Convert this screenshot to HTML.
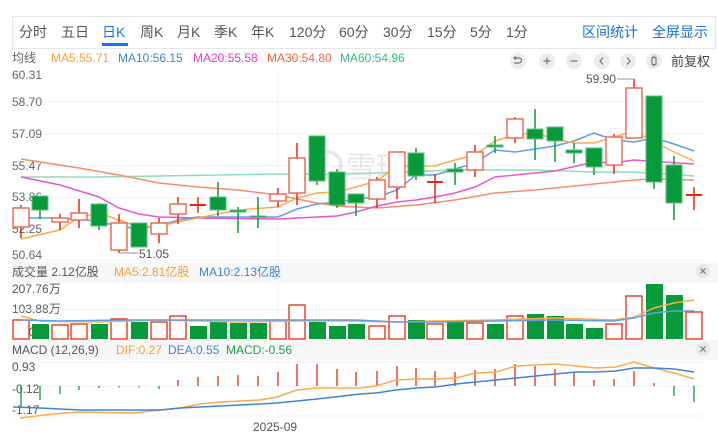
<!DOCTYPE html>
<html><head><meta charset="utf-8"><style>
html,body{margin:0;padding:0;background:#fff;width:718px;height:437px;overflow:hidden}
body{font-family:"Liberation Sans","Noto Sans CJK SC",sans-serif}
svg text{font-family:"Liberation Sans","Noto Sans CJK SC",sans-serif}
</style></head><body>
<svg width="718" height="437" viewBox="0 0 718 437" xmlns="http://www.w3.org/2000/svg">
<!-- tab bar -->
<rect x="12.5" y="16.5" width="703" height="32" fill="#fff" stroke="#e4e6ec"/>
<g font-size="14" fill="#555">
<text x="19" y="37">分时</text><text x="61" y="37">五日</text>
<text x="102" y="37" fill="#1a73e8">日K</text>
<text x="140" y="37">周K</text><text x="177" y="37">月K</text><text x="214" y="37">季K</text><text x="251" y="37">年K</text>
<text x="289" y="37">120分</text><text x="339" y="37">60分</text><text x="383" y="37">30分</text><text x="427" y="37">15分</text><text x="470" y="37">5分</text><text x="506" y="37">1分</text>
<text x="582" y="37" fill="#1a6fd8">区间统计</text><text x="652" y="37" fill="#1a6fd8">全屏显示</text>
</g>
<rect x="102" y="43" width="26" height="3" fill="#1a73e8"/>
<!-- MA legend -->
<g font-size="12">
<text x="12" y="62" fill="#666">均线</text>
<text x="51" y="62" fill="#f7a133">MA5:55.71</text>
<text x="118" y="62" fill="#3b86d8">MA10:56.15</text>
<text x="193" y="62" fill="#e33bc4">MA20:55.58</text>
<text x="267" y="62" fill="#f5643c">MA30:54.80</text>
<text x="340" y="62" fill="#2cc27a">MA60:54.96</text>
</g>
<g fill="#ececec"><circle cx="518" cy="61" r="8"/><circle cx="547" cy="61" r="8"/><circle cx="574" cy="61" r="8"/><circle cx="602" cy="61" r="8"/><circle cx="628" cy="61" r="8"/><circle cx="654" cy="61" r="8"/></g>
<g stroke="#777" stroke-width="1.2" fill="none">
<path d="M515 58h4a2.5 2.5 0 0 1 0 5h-5M516 56.5l-2 1.5 2 1.5"/>
<path d="M543.5 61h7M547 57.5v7"/><path d="M570.5 61h7"/>
<path d="M603 57.5l-3 3.5 3 3.5"/><path d="M627 57.5l3 3.5-3 3.5"/>
<rect x="652" y="57.5" width="4" height="7"/><path d="M654 55.5v2M654 64.5v2"/>
</g>
<text x="671" y="66" font-size="13" fill="#444">前复权</text>
<!-- grid -->
<g stroke="#f0f0f0" stroke-width="1">
<path d="M12 102H703M12 134H703M12 166H703M12 198H703M12 229H703M12 260H703"/>
<path d="M278 70V415"/>
<path d="M12 362H703M12 386H703M12 416H703"/>
</g>
<!-- watermark -->
<g opacity="0.13" fill="#556">
<circle cx="328" cy="165" r="13" fill="none" stroke="#556" stroke-width="4"/>
<text x="346" y="178" font-size="30">雪球</text>
</g>
<!-- price labels -->
<g font-size="12" fill="#666">
<text x="12" y="79">60.31</text><text x="12" y="106">58.70</text><text x="12" y="138">57.09</text>
<text x="12" y="170">55.47</text><text x="12" y="201">53.86</text><text x="12" y="233">52.25</text><text x="12" y="259">50.64</text>
</g>
<!-- MA lines -->
<g fill="none" stroke-width="1.5">
<polyline stroke="#8fdcb8" points="21,177 60,177 99,177 159,176 219,175 278,174 337,174 377,173 455,170 535,170 594,172 634,172 694,176"/>
<polyline stroke="#f98a6a" points="21,159 79,168 119,175 159,183 198,187 238,190 278,195 297,199 317,203 337,206 377,208 416,205 455,200 495,193 535,190 574,186 594,184 614,182 634,180 654,179 694,180"/>
<polyline stroke="#e956cf" points="21,177 60,185 99,197 119,208 139,214 159,217 198,218 278,219 337,216 356,212 377,206 397,202 416,200 435,197 455,193 475,187 495,177 515,175 535,173 555,171 594,162 614,163 634,160 694,164"/>
<polyline stroke="#5f9ee6" points="21,218 60,218 99,221 119,227 139,228 159,226 178,220 198,217 238,217 278,217 297,209 317,204 337,202 356,199 377,197 397,190 416,175 435,175 455,169 475,163 495,150 515,152 535,149 555,146 574,141 594,133 614,140 634,142 654,138 674,144 694,151"/>
<polyline stroke="#fbab4a" points="21,239 60,230 79,217 99,213 119,220 139,227 159,226 178,222 198,218 238,210 278,207 297,198 317,193 337,192 356,187 377,181 397,166 416,166 435,166 455,160 475,155 495,141 515,135 535,133 555,139 574,143 594,143 614,137 634,131 654,142 674,152 694,161"/>
</g>
<!-- candles -->
<g stroke-width="1.5">
<g stroke="#e42a12"><path d="M21 205V238M60 214V230M79 199V228M119 214V253M159 218V243M178 197V224M198 197V213M278 188V207M297 143V205M377 177V208M397 152V199M435 174V203M475 145V177M515 117V143M614 134V174M634 79V138M694 187V210"/></g>
<g stroke="#0a9a3c"><path d="M40 196V219M99 203V230M139 223V247M218 182V216M238 207V233M258 197V228M317 136V185M337 169V208M356 194V216M416 148V180M455 163V185M495 136V153M535 109V160M555 127V162M574 143V163M594 148V175M654 96V189M674 156V220"/></g>
<g fill="#fff" stroke="#ef6d56">
<rect x="13" y="208" width="16" height="19"/><rect x="52" y="218" width="16" height="4"/><rect x="71" y="213" width="16" height="7"/>
<rect x="111" y="223" width="16" height="27"/><rect x="151" y="223" width="16" height="11"/><rect x="170" y="204" width="16" height="10"/>
<rect x="270" y="194" width="16" height="7"/><rect x="289" y="158" width="16" height="35"/><rect x="369" y="180" width="16" height="19"/>
<rect x="389" y="152" width="16" height="35"/><rect x="467" y="152" width="16" height="18"/><rect x="507" y="119" width="16" height="19"/>
<rect x="606" y="137" width="16" height="28"/><rect x="626" y="88" width="16" height="50"/>
</g>
<g stroke="#e42a12" stroke-width="2"><path d="M190 205H206M427 182H443M686 195H702"/></g>
<g fill="#089a3a" stroke="#5cc27f" stroke-width="1">
<rect x="32" y="196" width="16" height="14"/><rect x="91" y="204" width="16" height="22"/><rect x="131" y="223" width="16" height="24"/>
<rect x="210" y="197" width="16" height="13"/><rect x="230" y="210" width="16" height="2"/><rect x="250" y="216" width="16" height="1.5"/>
<rect x="309" y="136" width="16" height="45"/><rect x="329" y="172" width="16" height="33"/><rect x="348" y="194" width="16" height="9"/>
<rect x="408" y="153" width="16" height="23"/><rect x="447" y="169" width="16" height="3"/><rect x="487" y="145" width="16" height="2"/>
<rect x="527" y="129" width="16" height="10"/><rect x="547" y="127" width="16" height="14"/><rect x="566" y="150" width="16" height="3"/>
<rect x="586" y="148" width="16" height="19"/><rect x="646" y="96" width="16" height="86"/><rect x="666" y="165" width="16" height="38"/>
</g>
</g>
<path d="M120 253H138" stroke="#999"/><text x="139" y="258" font-size="12" fill="#555">51.05</text>
<path d="M617 79H634" stroke="#999"/><text x="586" y="83" font-size="12" fill="#555">59.90</text>
<!-- volume header -->
<rect x="12" y="262" width="706" height="21" fill="#f7f7f7"/>
<g font-size="12"><text x="12" y="276" fill="#555">成交量 2.12亿股</text>
<text x="114" y="276" fill="#f7a133">MA5:2.81亿股</text><text x="199" y="276" fill="#3b86d8">MA10:2.13亿股</text></g>
<circle cx="703" cy="271" r="7" fill="#e8e8e8"/><path d="M700.5 268.5l5 5M705.5 268.5l-5 5" stroke="#777" stroke-width="1.2"/>
<g font-size="12" fill="#555"><text x="12" y="293">207.76万</text><text x="12" y="313">103.88万</text><text x="12" y="336">0.00</text></g>
<path d="M12 310H703" stroke="#f0f0f0"/>
<g stroke-width="1.3">
<g fill="#fff" stroke="#e42a12">
<rect x="13" y="320" width="16" height="19"/><rect x="52" y="325" width="16" height="14"/><rect x="71" y="324" width="16" height="15"/>
<rect x="111" y="319" width="16" height="20"/><rect x="151" y="322" width="16" height="17"/><rect x="170" y="316" width="16" height="23"/>
<rect x="270" y="320" width="16" height="19"/><rect x="289" y="305" width="16" height="34"/><rect x="369" y="326" width="16" height="13"/>
<rect x="389" y="316" width="16" height="23"/><rect x="427" y="324" width="16" height="15"/><rect x="467" y="323" width="16" height="16"/>
<rect x="507" y="316" width="16" height="23"/><rect x="606" y="324" width="16" height="15"/><rect x="626" y="296" width="16" height="43"/><rect x="686" y="312" width="16" height="27"/>
</g>
<g fill="#089a3a" stroke="none">
<rect x="32" y="324" width="17" height="15"/><rect x="91" y="324" width="17" height="15"/><rect x="131" y="322" width="17" height="17"/>
<rect x="190" y="326" width="17" height="13"/><rect x="210" y="322" width="17" height="17"/><rect x="230" y="323" width="17" height="16"/><rect x="250" y="323" width="17" height="16"/>
<rect x="309" y="322" width="17" height="17"/><rect x="329" y="326" width="17" height="13"/><rect x="348" y="324" width="17" height="15"/>
<rect x="408" y="320" width="17" height="19"/><rect x="447" y="321" width="17" height="18"/><rect x="487" y="324" width="17" height="15"/>
<rect x="527" y="314" width="17" height="25"/><rect x="547" y="316" width="17" height="23"/><rect x="566" y="324" width="17" height="15"/>
<rect x="586" y="328" width="17" height="11"/><rect x="646" y="284" width="17" height="55"/><rect x="666" y="295" width="17" height="44"/>
</g></g>
<g fill="none" stroke-width="1.5">
<polyline stroke="#fbab4a" points="21,316 40,321 99,322 159,320 238,322 297,321 356,321 397,322 435,321 495,320 555,318 614,320 634,317 654,308 674,303 694,300"/>
<polyline stroke="#5f9ee6" points="21,320 60,321 119,320 178,320 238,320 297,320 356,320 397,322 435,322 495,321 555,320 614,321 634,318 654,313 674,311 694,311"/>
</g>
<!-- MACD header -->
<rect x="12" y="340" width="706" height="20" fill="#f7f7f7"/>
<g font-size="12"><text x="12" y="354" fill="#555">MACD (12,26,9)</text>
<text x="116" y="354" fill="#f7a133">DIF:0.27</text><text x="168" y="354" fill="#3b86d8">DEA:0.55</text><text x="226" y="354" fill="#2a9a4a">MACD:-0.56</text></g>
<circle cx="703" cy="349" r="7" fill="#e8e8e8"/><path d="M700.5 346.5l5 5M705.5 346.5l-5 5" stroke="#777" stroke-width="1.2"/>
<g font-size="12" fill="#555"><text x="12" y="371">0.93</text><text x="12" y="393">-0.12</text><text x="12" y="414">-1.17</text></g>
<g stroke-width="1.3">
<path stroke="#0a9a3c" d="M21 386V408M40 386V400M60 386V394M79 386V390M99 386V388M119 386V387.5M139 386V387.5M159 386V389M674 386V396M694 386V402"/>
<path stroke="#e42a12" d="M178 380V386M198 377V386M218 376V386M238 375V386M258 376V386M278 372V386M297 364V386M317 364V386M337 369V386M356 372V386M377 371V386M397 366V386M416 368V386M435 371V386M455 372V386M475 370V386M495 369V386M515 364V386M535 366V386M555 369V386M574 373V386M594 380V386M614 379V386M634 371V386M654 383V386"/>
</g>
<g fill="none" stroke-width="1.5">
<polyline stroke="#fbab4a" points="20,418 53,414 80,412 133,413 180,408 200,404 220,402 260,400 277,397 297,390 317,388 360,388 376,386 396,380 416,379 436,379 456,378 476,373 496,372 516,366 536,365 556,364 576,366 596,368 616,367 634,362 654,368 674,373 694,379"/>
<polyline stroke="#3f83d6" points="13,407 40,408 80,410 160,410 180,408 260,404 277,403 317,399 360,394 376,393 396,390 416,388 436,387 456,384 476,382 496,380 516,378 536,376 556,374 576,372 596,372 616,371 634,368 654,368 674,369 694,372"/>
</g>
<text x="253" y="431" font-size="12" fill="#555">2025-09</text>
</svg>
</body></html>
